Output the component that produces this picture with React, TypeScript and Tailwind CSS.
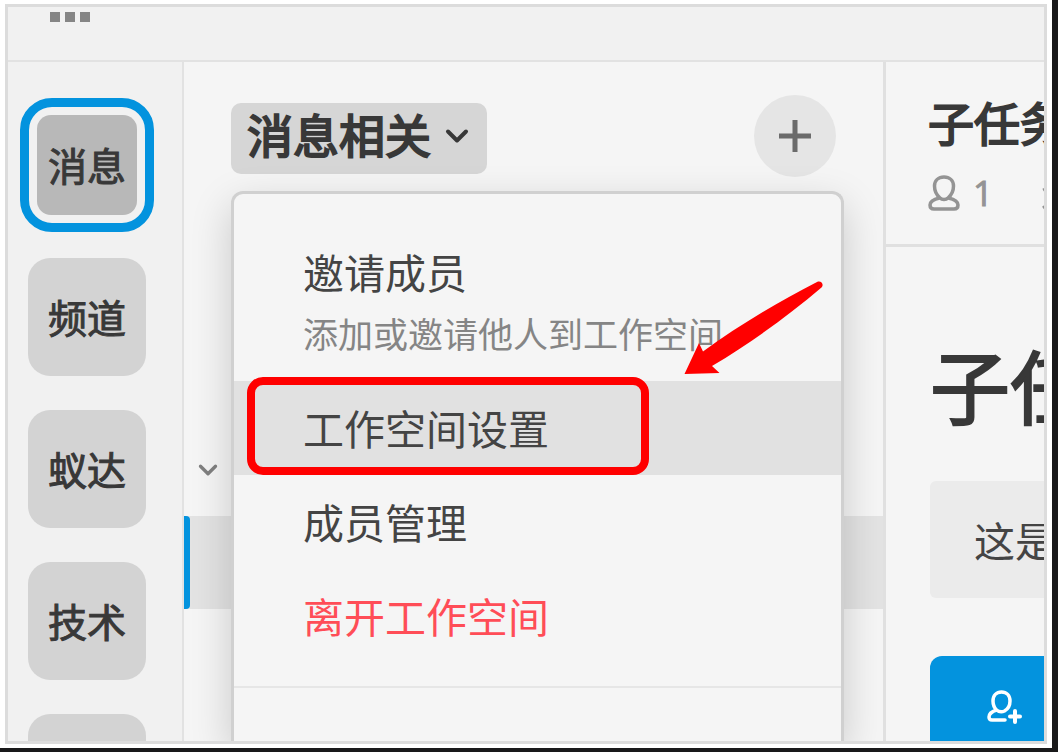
import { useState } from "react";

const workspaces = ["消息", "频道", "蚁达", "技术"];

function Chevron({ className }: { className?: string }) {
  return (
    <svg viewBox="0 0 24 16" fill="none" stroke="currentColor" strokeWidth={4} strokeLinecap="round" strokeLinejoin="round" className={className} aria-hidden="true">
      <path d="M3 3.500 L12 12.500 L21 3.500" />
    </svg>
  );
}

function UserIcon() {
  return (
    <svg width="32" height="36" viewBox="0 0 32 36" fill="none" stroke="currentColor" strokeWidth={3.5} strokeLinejoin="round" className="shrink-0" aria-hidden="true">
      <path d="M12 23 C8.500 20 6.500 15.500 6.500 11 C6.500 5.500 10.500 2 16 2 C21.500 2 25.500 5.500 25.500 11 C25.500 15.500 23.500 20 20 23 C18 25 14 25 12 23 Z" />
      <path d="M11.500 23 C5 24.500 2 27 2 30 C2 32.500 3.500 34 6 34 H26 C28.500 34 30 32.500 30 30 C30 27 27 24.500 20.500 23" />
    </svg>
  );
}

function UserPlusIcon() {
  return (
    <svg width="36" height="34" viewBox="0 0 36 34" fill="none" stroke="currentColor" strokeWidth={3.5} strokeLinecap="round" strokeLinejoin="round" className="shrink-0" aria-hidden="true">
      <path d="M18 30 H5 C3 30 2 29 2 27 C2 23.500 5 21.500 9.500 20 C7 17.500 6 14.500 6 11 C6 5.500 9.500 2 14.500 2 C19.500 2 23 5.500 23 11 C23 15 21 19 17.500 21 C14.500 22.500 12 22 9.500 20" />
      <path d="M23 26.500 H33 M28 21 V32" strokeWidth={4} />
    </svg>
  );
}

function Arrow() {
  return (
    <svg width="146" height="100" viewBox="0 0 146 100" className="pointer-events-none absolute left-[446px] top-[84px] z-10" aria-hidden="true">
      <path d="M4.500 96 L19 65 L23 73.500 C58 48 98 24 137 4 C141 2 144.500 6.500 141.500 9.500 C108 38 72 64 32 88 L39.500 95 Z" fill="#ff0000" />
    </svg>
  );
}

export default function App() {
  const [active, setActive] = useState("消息");

  return (
    <div className="h-screen overflow-hidden bg-[#19191a] pb-1 pr-1.5 font-['Noto_Sans_CJK_SC',sans-serif] text-[#383838]">
      <div className="h-full bg-white px-[5px] py-1">
        <div className="flex h-full flex-col overflow-hidden border-[3px] border-[#dcdcdc] bg-[#f5f5f5]">
          {/* Top bar */}
          <header className="h-[55px] shrink-0 border-b-2 border-[#e2e2e2] bg-[#f1f1f1] pl-[42px] pt-[5px]">
            <button aria-label="应用" className="flex gap-[5px]">
              <span className="size-[10px] bg-[#858585]" />
              <span className="size-[10px] bg-[#858585]" />
              <span className="size-[10px] bg-[#858585]" />
            </button>
          </header>

          <div className="flex min-h-0 flex-1">
            {/* Workspace rail */}
            <nav className="w-[176px] shrink-0 overflow-hidden border-r-2 border-[#e2e2e2] bg-[#f1f1f1] pl-3 pt-9">
              <ul className="flex flex-col gap-[18px] text-[39px] [-webkit-text-stroke:1px]">
                {workspaces.map((name) => (
                  <li key={name} className="size-[134px] shrink-0">
                    {name === active ? (
                      <button className="size-full rounded-[32px] border-[9px] border-[#0393de] p-2">
                        <span className="flex size-full items-center justify-center rounded-[14px] bg-[#b8b8b8] pb-0.5">{name}</span>
                      </button>
                    ) : (
                      <button onClick={() => setActive(name)} className="size-full p-2">
                        <span className="flex size-full items-center justify-center rounded-[22px] bg-[#d3d3d3] pb-0.5">{name}</span>
                      </button>
                    )}
                  </li>
                ))}
                <li className="size-[134px] shrink-0">
                  <button aria-label="更多" className="size-full p-2">
                    <span className="block size-full rounded-[22px] bg-[#d3d3d3]" />
                  </button>
                </li>
              </ul>
            </nav>

            {/* Channel list */}
            <section className="relative min-w-0 flex-1 overflow-hidden pt-[33px]">
              <div className="flex items-start justify-between px-[47px]">
                <button className="mt-2 flex h-[71px] items-center gap-[14px] rounded-[10px] bg-[#d6d6d6] pl-4 pr-[18px] text-[46px] [-webkit-text-stroke:2px]">
                  <span className="pb-2.5">消息相关</span>
                  <Chevron className="mb-1.5 h-4 w-6" />
                </button>
                <button aria-label="新建" className="flex size-[82px] items-center justify-center rounded-full bg-[#e5e5e5] text-[#6b6b6b]">
                  <svg width="32" height="32" viewBox="0 0 32 32" stroke="currentColor" strokeWidth={5} aria-hidden="true">
                    <path d="M0 16 H32 M16 0 V32" />
                  </svg>
                </button>
              </div>

              <div className="mt-[246px]">
                <button aria-label="展开" className="flex h-[93px] w-full items-center pl-[14px] text-[#808080]">
                  <Chevron className="h-[14px] w-5" />
                </button>
                <button aria-label="频道" className="flex h-[93px] w-full bg-[#e3e3e3]">
                  <span className="h-full w-1.5 rounded-r bg-[#0393de]" />
                </button>
              </div>

              {/* Dropdown */}
              <div className="absolute bottom-0 left-[47px] right-[39px] top-[129px] rounded-t-xl border-[3px] border-b-0 border-[#d0d0d0] bg-[#f5f5f5] text-[41px] text-[#444] shadow-[0_14px_40px_rgba(0,0,0,0.18)]">
                <div className="flex flex-col border-b-2 border-[#e6e6e6] pb-[23px]">
                  <button className="h-[187px] pl-[69px] pt-7 text-left">
                    <span className="block leading-[62px]">邀请成员</span>
                    <span className="block text-[35px] leading-[62px] text-[#858585]">添加或邀请他人到工作空间</span>
                  </button>
                  <button className="relative h-[94px] bg-[#e1e1e1] pl-[69px] text-left">
                    工作空间设置
                    <span className="absolute -top-1 bottom-0 left-[13px] w-[402px] rounded-[16px] border-8 border-[#ff0000]" />
                  </button>
                  <button className="h-[94px] pl-[69px] text-left">成员管理</button>
                  <button className="h-[94px] pl-[69px] text-left text-[#ff4d57]">离开工作空间</button>
                </div>
                <Arrow />
              </div>
            </section>

            {/* Detail panel */}
            <main className="w-[161px] shrink-0 overflow-hidden whitespace-nowrap border-l-[3px] border-[#e0e0e0]">
              <div className="h-[185px] border-b-[3px] border-[#e0e0e0] pl-[42px] pt-7">
                <h2 className="text-[46px] leading-[62px] [-webkit-text-stroke:2px]">子任务</h2>
                <div className="mt-2.5 flex items-center gap-[13px] font-['Open_Sans',sans-serif] text-[35px] leading-[62px] text-[#949494]">
                  <UserIcon />
                  <span className="[-webkit-text-stroke:1px]">1</span>
                  <svg width="32" height="36" viewBox="0 0 32 36" fill="none" stroke="currentColor" strokeWidth={3} className="ml-9 shrink-0" aria-hidden="true">
                    <path d="M1 15 L10 11 M1 33 L10 26" />
                  </svg>
                </div>
              </div>
              <div className="pl-11">
                <h1 className="pt-[78px] text-[80px] leading-[116px] [-webkit-text-stroke:2px]">子任务</h1>
                <p className="mt-10 h-[117px] rounded-l-md bg-[#ebebeb] pl-11 text-[41px] leading-[117px] text-[#444]">这是</p>
                <button className="mt-[58px] flex h-[117px] w-full rounded-tl-xl bg-[#0393de] pl-[57px] pt-[34px] text-white">
                  <UserPlusIcon />
                </button>
              </div>
            </main>
          </div>
        </div>
      </div>
    </div>
  );
}
